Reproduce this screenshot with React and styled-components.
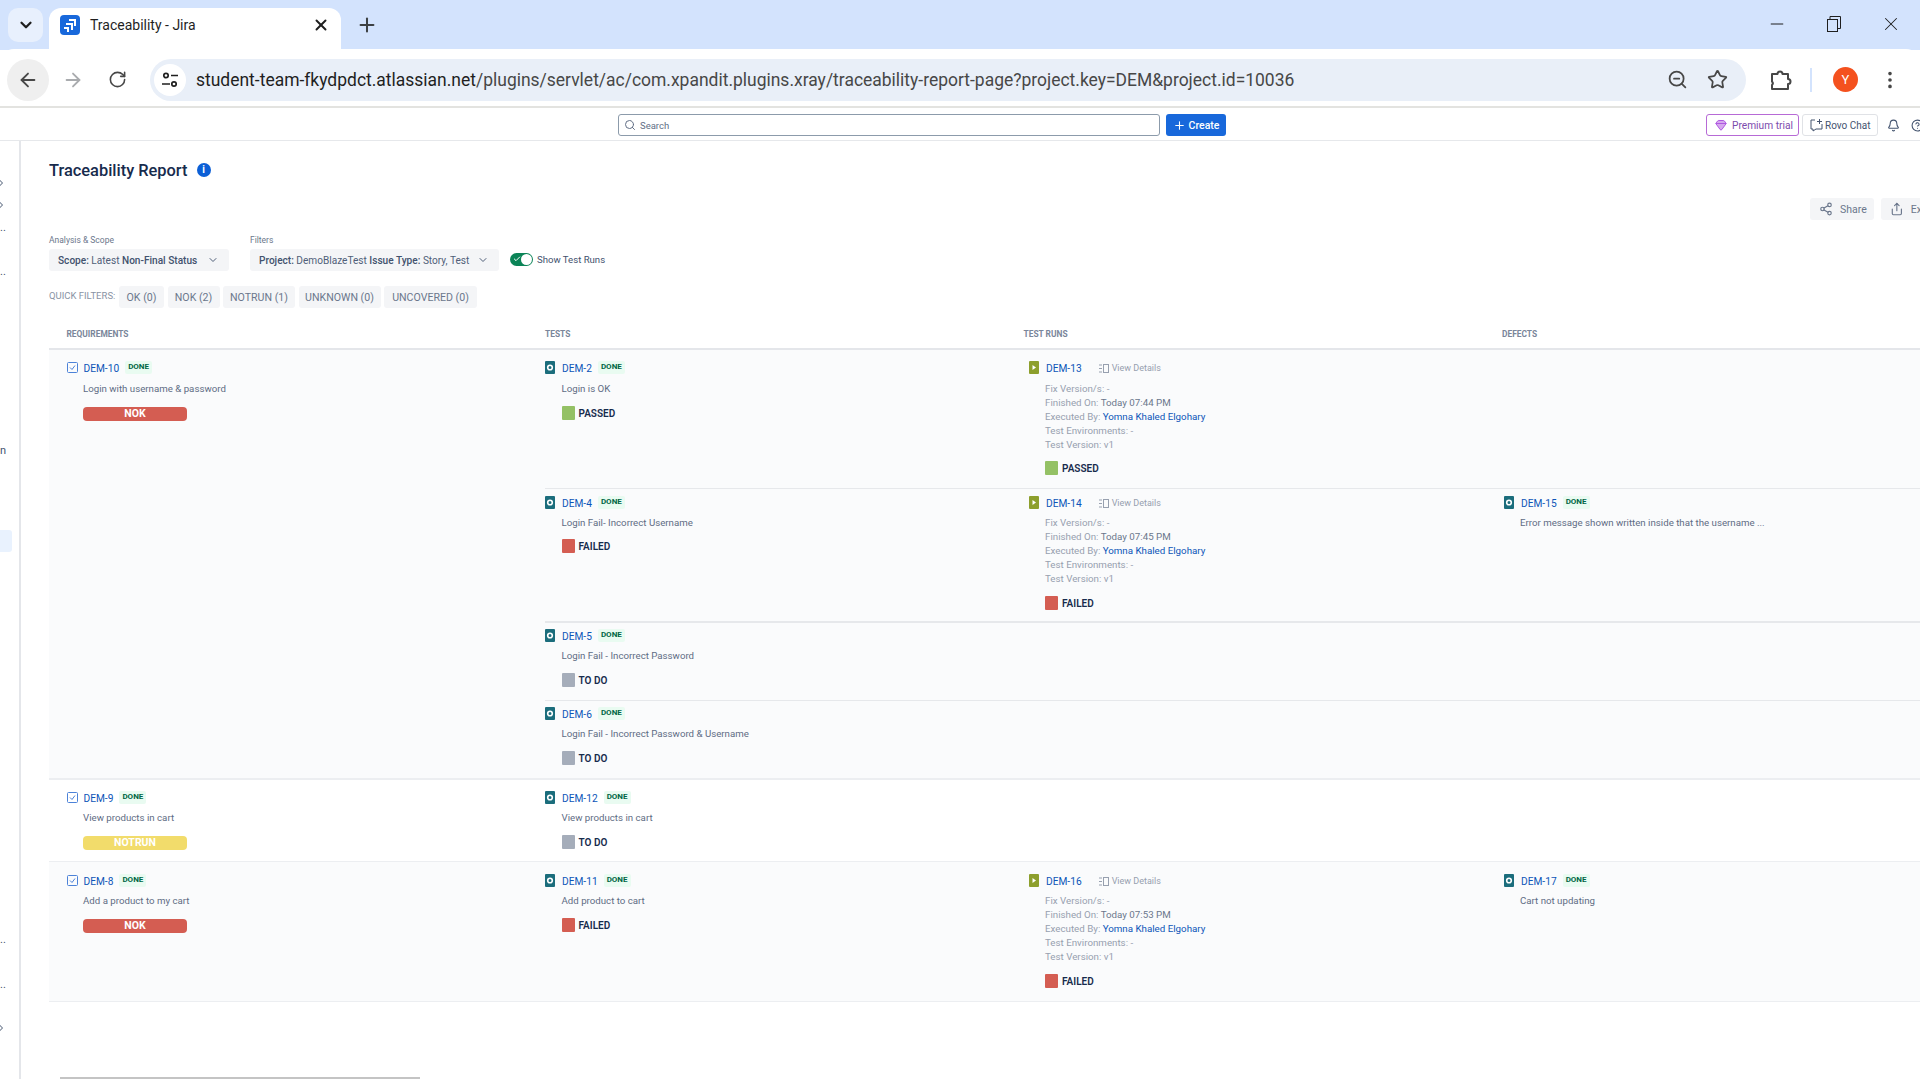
import * as React from 'react';
import styled, { createGlobalStyle } from 'styled-components';
import { ArrowLeft, ArrowRight, Bell, ChevronDown, ChevronRight, CircleHelp, Gem, MoreVertical, Plus, RotateCw, Search, Share, Share2, Star, X, ZoomOut, Minus, Check } from 'lucide-react';

const UI_FONT = 'Roboto, "Noto Sans", Arial, sans-serif';

const GlobalStyle = createGlobalStyle`
  html, body {
    margin: 0;
    padding: 0;
    background: #fff;
    overflow: hidden;
  }
  * { box-sizing: border-box; }
`;

const Page = styled.div`
  position: relative;
  width: 1920px;
  height: 1079px;
  overflow: hidden;
  font-family: ${UI_FONT};
  color: #172b4d;
  background: #fff;
`;

/* browser chrome */
const TabStrip = styled.div`
  height: 50px;
  background: #d3e3fd;
  display: flex;
  align-items: flex-end;
  padding-left: 8px;
`;

const TabList = styled.div`
  width: 35px;
  height: 34px;
  margin-bottom: 8px;
  border-radius: 10px;
  background: #e8f0fd;
  display: flex;
  align-items: center;
  justify-content: center;
  color: #1f1f1f;
`;

const Tab = styled.div`
  width: 292px;
  height: 42px;
  margin-left: 6px;
  border-radius: 12px 12px 0 0;
  background: #fff;
  display: flex;
  align-items: center;
  padding: 0 11px 8px;
  color: #1f1f1f;
`;

const TabFavicon = styled.svg`
  width: 20px;
  height: 20px;
  flex: none;
`;

const TabTitle = styled.span`
  flex: 1;
  margin-left: 10px;
  font-size: 14px;
`;

const NewTab = styled.div`
  margin: 0 0 14px 15px;
  height: 22px;
  color: #3c4043;
`;

const WindowControls = styled.div`
  margin-left: auto;
  height: 50px;
  display: flex;
  align-items: center;
  padding: 0 18px 3px 0;
  gap: 39.5px;
  color: #1f1f1f;
`;

const Toolbar = styled.div`
  height: 59px;
  background: #fff;
  border-bottom: 2px solid #e3e3e0;
  border-radius: 14px 14px 0 0;
  margin-top: -1px;
  display: flex;
  align-items: center;
  padding: 4px 13px 0 7px;
  color: #474747;
`;

const ToolButton = styled.div`
  width: ${(p) => p.$size || 42}px;
  height: ${(p) => p.$size || 42}px;
  margin-left: ${(p) => p.$ml || 0}px;
  flex: none;
  border-radius: 50%;
  display: flex;
  align-items: center;
  justify-content: center;
  background: ${(p) => (p.$active ? '#efefef' : 'transparent')};
  color: ${(p) => (p.$dim ? '#a9abae' : 'inherit')};
`;

const AddressBar = styled.div`
  width: 1596px;
  height: 42px;
  margin-left: 12px;
  flex: none;
  border-radius: 21px;
  background: #e9eff8;
  display: flex;
  align-items: center;
  padding: 0 13px 0 4px;
`;

const SiteInfo = styled.div`
  width: 32px;
  height: 32px;
  border-radius: 50%;
  background: #fff;
  display: flex;
  align-items: center;
  justify-content: center;
  flex: none;
`;

const Url = styled.div`
  flex: 1;
  margin-left: 10px;
  font-size: 17.48px;
  color: #474747;
  white-space: nowrap;

  b {
    font-weight: 400;
    color: #1f1f1f;
  }
`;

const ToolDivider = styled.div`
  width: 2px;
  height: 24px;
  margin: 0 21px 0 9px;
  background: #d3e3fd;
`;

const Avatar = styled.div`
  width: 25px;
  height: 25px;
  border-radius: 50%;
  background: #f4511e;
  color: #fff;
  font-size: 13px;
  display: flex;
  align-items: center;
  justify-content: center;
  flex: none;
  margin-right: 21px;
`;

/* jira top bar */
const TopBar = styled.div`
  width: 1960px;
  height: 33px;
  border-bottom: 1px solid #e6e8eb;
  display: flex;
  align-items: center;
  padding: 2px 36px 0 618px;
`;

const SearchBox = styled.div`
  width: 542px;
  height: 22px;
  border: 1px solid #8c9bab;
  border-radius: 3px;
  display: flex;
  align-items: center;
  gap: 4px;
  padding-left: 5px;
  font-size: 9.5px;
  color: #626f86;
`;

const CreateButton = styled.div`
  width: 60px;
  height: 22px;
  margin-left: 6px;
  border-radius: 3px;
  background: #1868db;
  color: #fff;
  font-size: 10.5px;
  font-weight: 500;
  display: flex;
  align-items: center;
  justify-content: center;
  gap: 3px;
`;

const TopRight = styled.div`
  margin-left: auto;
  display: flex;
  align-items: center;
`;

const TopButton = styled.div`
  height: 22px;
  width: ${(p) => p.$w}px;
  padding-left: ${(p) => (p.$premium ? 8 : 7)}px;
  margin-right: 3px;
  border-radius: 3px;
  border: 1px solid ${(p) => (p.$premium ? '#b76ad6' : '#e0e2e6')};
  color: ${(p) => (p.$premium ? '#7c4bad' : '#44546f')};
  font-size: ${(p) => (p.$premium ? 10.2 : 10)}px;
  white-space: nowrap;
  display: flex;
  align-items: center;
  gap: ${(p) => (p.$premium ? 5 : 2)}px;
`;

const TopIcon = styled.div`
  margin-left: ${(p) => p.$ml}px;
  display: flex;
  color: #44546f;
`;

/* page body */
const Body = styled.div`
  display: flex;
  height: 938px;
`;

const Sidebar = styled.div`
  width: 21px;
  flex: none;
  border-right: 2px solid #e4e6ea;
  overflow: hidden;
  color: #44546f;
`;

const SideItem = styled.div`
  height: 22px;
  width: 12px;
  margin-top: ${(p) => p.$mt || 0}px;
  border-radius: 0 3px 3px 0;
  background: ${(p) => (p.$active ? '#e9f2fe' : 'transparent')};
  font-size: 11px;
  line-height: 22px;
  display: flex;
  align-items: center;
  white-space: nowrap;
`;

const SideChevron = styled(ChevronRight)`
  margin-left: -5px;
  flex: none;
`;

const Main = styled.main`
  width: 1942px;
  flex: none;
  padding: 17px 0 0 28px;
`;

const TitleRow = styled.div`
  display: flex;
  align-items: center;
  gap: 9px;
  height: 24px;
`;

const Title = styled.h1`
  margin: 0;
  font-size: 16.4px;
  font-weight: 500;
  color: #172b4d;
`;

const InfoDot = styled.div`
  width: 14px;
  height: 14px;
  border-radius: 50%;
  background: #0c5fd6;
  color: #fff;
  font: 700 10px/14px ${UI_FONT};
  text-align: center;
`;

const Actions = styled.div`
  display: flex;
  justify-content: flex-end;
  gap: 7px;
  margin-top: 16px;
  height: 22px;
  padding-right: 22px;
`;

const ActionButton = styled.div`
  height: 22px;
  width: ${(p) => p.$w}px;
  border-radius: 3px;
  background: #f4f5f7;
  color: #6b778c;
  font-size: 10.5px;
  display: flex;
  align-items: center;
  gap: 7px;
  padding-left: 9px;
`;

const FilterRow = styled.div`
  display: flex;
  align-items: flex-end;
  margin-top: 14px;
`;

const FilterBlock = styled.div`
  margin-right: 21px;
`;

const FilterLabel = styled.div`
  height: 15px;
  font-size: 8.5px;
  line-height: 12px;
  color: #6b778c;
`;

const Select = styled.div`
  width: ${(p) => p.$w}px;
  height: 22px;
  border-radius: 3px;
  background: #f4f5f7;
  color: #505f79;
  font-size: 10.1px;
  display: flex;
  align-items: center;
  justify-content: space-between;
  padding: 0 10px 0 9px;
  white-space: nowrap;

  b {
    font-weight: 500;
    color: #42526e;
  }
`;

const ToggleWrap = styled.div`
  display: flex;
  align-items: center;
  gap: 4px;
  height: 22px;
  margin: 0 0 1px -10px;
  font-size: 9.6px;
  color: #42526e;
`;

const Toggle = styled.div`
  position: relative;
  width: 23px;
  height: 13px;
  border-radius: 7px;
  background: #0b8457;
  color: #fff;
  display: flex;
  align-items: center;
  padding-left: 3px;

  &::after {
    content: '';
    position: absolute;
    right: 1px;
    top: 1px;
    width: 11px;
    height: 11px;
    border-radius: 50%;
    background: #fff;
  }
`;

const QuickRow = styled.div`
  display: flex;
  align-items: center;
  margin-top: 15px;
  height: 22px;
`;

const QuickLabel = styled.div`
  width: 70px;
  margin-top: -4px;
  font-size: 9.5px;
  color: #8993a4;
`;

const QuickButton = styled.div`
  height: 22px;
  width: ${(p) => p.$w}px;
  margin-right: 3.5px;
  border-radius: 3px;
  background: #f4f5f7;
  color: #6b778c;
  font-size: 10.6px;
  display: flex;
  align-items: center;
  justify-content: center;
  white-space: nowrap;
`;

const HeaderRow = styled.div`
  display: grid;
  grid-template-columns: repeat(4, 478.5px);
  height: 42px;
  padding-top: 20px;
  border-bottom: 2px solid #e4e6ea;
`;

const HeaderCell = styled.div`
  padding-left: 17.5px;
  font-size: 8.4px;
  font-weight: 700;
  line-height: 13px;
  color: #7a869a;
`;

const Group = styled.div`
  display: grid;
  grid-template-columns: 496px 1fr;
  height: ${(p) => p.$h}px;
  background: ${(p) => (p.$white ? '#fff' : '#fafbfc')};
  border-bottom: ${(p) => p.$line || 1}px solid #eceef1;
`;

const Requirement = styled.div`
  padding: ${(p) => p.$pad}px 0 0 17.5px;
`;

const SubRow = styled.div`
  display: grid;
  grid-template-columns: 461px 478.5px 478.5px;
  height: ${(p) => p.$h}px;
  border-bottom: ${(p) => p.$line || 0}px solid #e6e8eb;
  padding-top: ${(p) => p.$pad}px;
`;

const Cell = styled.div`
  padding-left: ${(p) => p.$indent || 0}px;
`;

const IssueHead = styled.div`
  height: 20px;
  display: flex;
  align-items: center;
`;

const IssueIcon = styled.svg`
  width: 11px;
  height: 13px;
  flex: none;
  margin: -2px 6px 0 0;
`;

const IssueKey = styled.span`
  font-size: 10.2px;
  color: #0c55b8;
  margin-top: 1px;
  min-width: ${(p) => p.$min || 0}px;
`;

const DoneChip = styled.span`
  margin: -2px 0 0 6px;
  height: 13px;
  padding: 0 3px;
  border-radius: 2px;
  background: #e9fbf1;
  color: #006644;
  font-size: 8px;
  font-weight: 700;
  line-height: 12px;
`;

const ViewDetails = styled.span`
  margin-left: 17px;
  display: flex;
  align-items: center;
  gap: 3px;
  font-size: 9px;
  color: #97a0af;
`;

const Text = styled.div`
  margin: ${(p) => p.$gap}px 0 0 ${(p) => p.$left}px;
  font-size: 9.7px;
  line-height: 14px;
  color: #5e6c84;
  white-space: nowrap;
`;

const StatusPill = styled.div`
  margin: 11px 0 0 16.5px;
  width: 104px;
  height: 14px;
  border-radius: 4px;
  background: ${(p) => p.$color};
  color: #fff;
  font-size: 10.5px;
  font-weight: 700;
  line-height: 14px;
  text-align: center;
`;

const StatusLine = styled.div`
  margin: ${(p) => p.$gap}px 0 0 ${(p) => p.$left}px;
  height: 14px;
  display: flex;
  align-items: center;
  gap: 4px;
  font-size: 10px;
  font-weight: 600;
  color: #172b4d;
`;

const StatusSquare = styled.span`
  width: 13px;
  height: 14px;
  border-radius: 1px;
  background: ${(p) => p.$color};
`;

const Details = styled.div`
  margin: ${(p) => p.$gap}px 0 0 16px;
  font-size: 9.75px;
  line-height: 14px;
  color: #97a0af;
  white-space: nowrap;

  span { color: #6b778c; }
  a { color: #0c55b8; }
`;

const Scrollbar = styled.div`
  position: absolute;
  left: 60px;
  bottom: 0;
  width: 360px;
  height: 2px;
  background: #c4c4c4;
`;

const STATUS = {
  PASSED: '#94c165',
  FAILED: '#d45d52',
  'TO DO': '#a5adba',
};

const TabLogo = () => (
  <TabFavicon viewBox="0 0 20 20">
    <rect width="20" height="20" rx="4" fill="#1868db" />
    <path d="M9 4h7v7h-2V6H9zM6 8h7v7h-2v-5H6zM4 12h5v5H7v-3H4z" fill="#fff" />
  </TabFavicon>
);

const RestoreIcon = () => (
  <svg width="14" height="16" viewBox="0 0 14 16" fill="none" stroke="#1f1f1f" strokeWidth="1">
    <rect x="0.5" y="3.5" width="10" height="12" />
    <path d="M3 3.5V0.5h10.5v12h-3" />
  </svg>
);

const TuneIcon = () => (
  <svg width="18" height="18" viewBox="0 0 18 18" fill="none" stroke="#1f1f1f" strokeWidth="1.7">
    <circle cx="5" cy="4.5" r="2.2" />
    <path d="M10 4.500h7M1 13h8" />
    <circle cx="13" cy="13" r="2.2" />
  </svg>
);

const ExtensionIcon = () => (
  <svg width="24" height="24" viewBox="0 0 24 24" fill="none" stroke="#474747" strokeWidth="2" strokeLinejoin="round">
    <path d="M4 6h5.500a2.500 2.500 0 0 1 5 0H20v5a2.500 2.500 0 0 1 0 5v5H4v-4a2.500 2.500 0 0 0 0-3.500z" />
  </svg>
);

const RovoIcon = () => (
  <svg width="13" height="14" viewBox="0 0 13 14" fill="none" stroke="#44546f">
    <path d="M5 2H1v9h2v2l3-2h6V6" />
    <path d="M9.500 1v5M7 3.500h5" />
  </svg>
);

const ReqIcon = () => (
  <IssueIcon viewBox="0 0 11 13" fill="none">
    <rect x="0.5" y="1.5" width="10" height="10" rx="1" stroke="#4c82d8" />
    <path d="M3 6.500l2 2 3-4" stroke="#4c82d8" />
  </IssueIcon>
);

const TestIcon = () => (
  <IssueIcon viewBox="0 0 11 13">
    <rect width="10" height="13" rx="1" fill="#1b6d7c" />
    <circle cx="5" cy="6.500" r="2.300" fill="none" stroke="#fff" strokeWidth="1.6" />
  </IssueIcon>
);

const RunIcon = () => (
  <IssueIcon viewBox="0 0 11 13">
    <rect width="10" height="13" rx="1" fill="#8d9f2d" />
    <path d="M3.500 4l3.500 2.500L3.500 9z" fill="#fff" />
  </IssueIcon>
);

const Issue = ({ icon, id }) => (
  <IssueHead>
    {icon}
    <IssueKey>{id}</IssueKey>
    <DoneChip>DONE</DoneChip>
  </IssueHead>
);

const Status = ({ value, left, gap = 10 }) => (
  <StatusLine $left={left} $gap={gap}>
    <StatusSquare $color={STATUS[value]} />
    {value}
  </StatusLine>
);

const TestCell = ({ id, title, status, gap = 3, statusGap = 10 }) => (
  <Cell>
    <Issue icon={<TestIcon />} id={id} />
    <Text $left={16.5} $gap={gap}>{title}</Text>
    <Status value={status} left={16.5} gap={statusGap} />
  </Cell>
);

const RunCell = ({ id, finished, status, gap = 3 }) => (
  <Cell $indent={23}>
    <IssueHead>
      <RunIcon />
      <IssueKey $min={35}>{id}</IssueKey>
      <ViewDetails>
        <svg width="10" height="9" viewBox="0 0 10 9" fill="none" stroke="#97a0af">
          <path d="M0 1h3M0 4.500h3M0 8h3" />
          <rect x="4.500" y="0.500" width="5" height="8" />
        </svg>
        View Details
      </ViewDetails>
    </IssueHead>
    <Details $gap={gap}>
      <div>Fix Version/s: -</div>
      <div>Finished On: <span>{finished}</span></div>
      <div>Executed By: <a>Yomna Khaled Elgohary</a></div>
      <div>Test Environments: -</div>
      <div>Test Version: v1</div>
    </Details>
    <Status value={status} left={16} gap={13 - gap} />
  </Cell>
);

const DefectCell = ({ id, text }) => (
  <Cell $indent={19.5}>
    <Issue icon={<TestIcon />} id={id} />
    <Text $left={16} $gap={3}>{text}</Text>
  </Cell>
);

const ReqCell = ({ id, title, pill, pad, gap = 3 }) => (
  <Requirement $pad={pad}>
    <Issue icon={<ReqIcon />} id={id} />
    <Text $left={16.5} $gap={gap}>{title}</Text>
    <StatusPill $color={pill === 'NOK' ? '#d45d52' : '#f2dc6b'}>{pill}</StatusPill>
  </Requirement>
);

const QUICK = [
  ['OK (0)', 45],
  ['NOK (2)', 52],
  ['NOTRUN (1)', 72],
  ['UNKNOWN (0)', 82],
  ['UNCOVERED (0)', 93],
];

export default function App() {
  return (
    <Page>
      <GlobalStyle />
      <TabStrip>
        <TabList><ChevronDown size={18} strokeWidth={3} /></TabList>
        <Tab>
          <TabLogo />
          <TabTitle>Traceability - Jira</TabTitle>
          <X size={18} strokeWidth={2.6} />
        </Tab>
        <NewTab><Plus size={22} strokeWidth={2.2} /></NewTab>
        <WindowControls>
          <Minus size={20} strokeWidth={1.2} />
          <RestoreIcon />
          <X size={22} strokeWidth={1.1} />
        </WindowControls>
      </TabStrip>
      <Toolbar>
        <ToolButton $active><ArrowLeft size={22} /></ToolButton>
        <ToolButton $dim $ml={3}><ArrowRight size={22} /></ToolButton>
        <ToolButton $ml={2}><RotateCw size={19} /></ToolButton>
        <AddressBar>
          <SiteInfo><TuneIcon /></SiteInfo>
          <Url>
            <b>student-team-fkydpdct.atlassian.net</b>/plugins/servlet/ac/com.xpandit.plugins.xray/traceability-report-page?project.key=DEM&amp;project.id=10036
          </Url>
          <ToolButton $size={32}><ZoomOut size={21} /></ToolButton>
          <ToolButton $size={32} $ml={8}><Star size={21} /></ToolButton>
        </AddressBar>
        <ToolButton $ml={13}><ExtensionIcon /></ToolButton>
        <ToolDivider />
        <Avatar>Y</Avatar>
        <ToolButton $size={22}><MoreVertical size={22} /></ToolButton>
      </Toolbar>
      <TopBar>
        <SearchBox><Search size={12} />Search</SearchBox>
        <CreateButton><Plus size={13} />Create</CreateButton>
        <TopRight>
          <TopButton $premium $w={93}><Gem size={12} color="#af59e1" fill="#d6a8ee" />Premium trial</TopButton>
          <TopButton $w={76}><RovoIcon />Rovo Chat</TopButton>
          <TopIcon $ml={6}><Bell size={13} /></TopIcon>
          <TopIcon $ml={11}><CircleHelp size={13} /></TopIcon>
        </TopRight>
      </TopBar>
      <Body>
        <Sidebar>
          <SideItem $mt={31}><SideChevron size={12} /></SideItem>
          <SideItem><SideChevron size={12} /></SideItem>
          <SideItem $mt={1}>..</SideItem>
          <SideItem $mt={22}>..</SideItem>
          <SideItem $mt={157}>n</SideItem>
          <SideItem $mt={68} $active />
          <SideItem $mt={377}>..</SideItem>
          <SideItem $mt={23}>..</SideItem>
          <SideItem $mt={21}><SideChevron size={12} /></SideItem>
        </Sidebar>
        <Main>
          <TitleRow>
            <Title>Traceability Report</Title>
            <InfoDot>i</InfoDot>
          </TitleRow>
          <Actions>
            <ActionButton $w={64}><Share2 size={14} />Share</ActionButton>
            <ActionButton $w={60}><Share size={14} />Export</ActionButton>
          </Actions>
          <FilterRow>
            <FilterBlock>
              <FilterLabel>Analysis &amp; Scope</FilterLabel>
              <Select $w={180}>
                <span><b>Scope:</b> Latest <b>Non-Final Status</b></span>
                <ChevronDown size={12} />
              </Select>
            </FilterBlock>
            <FilterBlock>
              <FilterLabel>Filters</FilterLabel>
              <Select $w={249}>
                <span><b>Project:</b> DemoBlazeTest <b>Issue Type:</b> Story, Test</span>
                <ChevronDown size={12} />
              </Select>
            </FilterBlock>
            <ToggleWrap>
              <Toggle><Check size={8} strokeWidth={3} /></Toggle>
              Show Test Runs
            </ToggleWrap>
          </FilterRow>
          <QuickRow>
            <QuickLabel>QUICK FILTERS:</QuickLabel>
            {QUICK.map(([label, w]) => <QuickButton key={label} $w={w}>{label}</QuickButton>)}
          </QuickRow>
          <HeaderRow>
            <HeaderCell>REQUIREMENTS</HeaderCell>
            <HeaderCell>TESTS</HeaderCell>
            <HeaderCell>TEST RUNS</HeaderCell>
            <HeaderCell>DEFECTS</HeaderCell>
          </HeaderRow>

          <Group $h={430} $line={2}>
            <ReqCell id="DEM-10" title="Login with username & password" pill="NOK" pad={8} gap={4} />
            <div>
              <SubRow $h={139} $pad={8} $line={1}>
                <TestCell id="DEM-2" title="Login is OK" status="PASSED" gap={4} />
                <RunCell id="DEM-13" finished="Today 07:44 PM" status="PASSED" gap={4} />
              </SubRow>
              <SubRow $h={134} $pad={4} $line={2}>
                <TestCell id="DEM-4" title="Login Fail- Incorrect Username" status="FAILED" statusGap={9} />
                <RunCell id="DEM-14" finished="Today 07:45 PM" status="FAILED" />
                <DefectCell id="DEM-15" text="Error message shown written inside that the username ..." />
              </SubRow>
              <SubRow $h={78} $pad={3} $line={1}>
                <TestCell id="DEM-5" title="Login Fail - Incorrect Password" status="TO DO" />
              </SubRow>
              <SubRow $h={77} $pad={3}>
                <TestCell id="DEM-6" title="Login Fail - Incorrect Password & Username" status="TO DO" />
              </SubRow>
            </div>
          </Group>

          <Group $h={82} $white>
            <ReqCell id="DEM-9" title="View products in cart" pill="NOTRUN" pad={8} />
            <SubRow $h={81} $pad={8}>
              <TestCell id="DEM-12" title="View products in cart" status="TO DO" />
            </SubRow>
          </Group>

          <Group $h={140}>
            <ReqCell id="DEM-8" title="Add a product to my cart" pill="NOK" pad={9} />
            <SubRow $h={139} $pad={9}>
              <TestCell id="DEM-11" title="Add product to cart" status="FAILED" />
              <RunCell id="DEM-16" finished="Today 07:53 PM" status="FAILED" />
              <DefectCell id="DEM-17" text="Cart not updating" />
            </SubRow>
          </Group>
        </Main>
      </Body>
      <Scrollbar />
    </Page>
  );
}
